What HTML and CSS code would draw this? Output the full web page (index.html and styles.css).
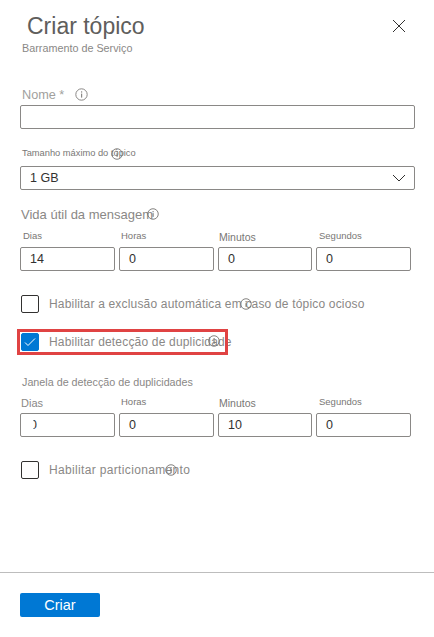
FILE: index.html

```html
<!DOCTYPE html>
<html lang="pt">
<head>
  <meta charset="UTF-8" />
  <meta name="viewport" content="width=device-width, initial-scale=1.0" />
  <title>Criar tópico</title>
  <link rel="stylesheet" href="styles.css">
</head>
<body>
  <div class="panel">
    <svg width="0" height="0" class="defs">
      <symbol id="info" viewBox="0 0 13 13">
        <circle cx="6.5" cy="6.5" r="5.7" fill="none" stroke="currentColor" stroke-width="1"/>
        <rect x="6" y="5.6" width="1.2" height="4" fill="currentColor"/>
        <rect x="6" y="3.3" width="1.2" height="1.3" fill="currentColor"/>
      </symbol>
    </svg>

    <header class="head">
      <div>
        <h1>Criar tópico</h1>
        <p class="subtitle">Barramento de Serviço</p>
      </div>
      <svg class="close" width="14" height="14" viewBox="0 0 14 14">
        <path d="M1 1L13 13M13 1L1 13" stroke="#323130" stroke-width="1" fill="none"/>
      </svg>
    </header>

    <div class="form">
      <div class="name-label">
        <span>Nome *</span>
        <svg class="info-inline"><use href="#info"/></svg>
      </div>
      <div class="box"></div>

      <div class="size-label">
        <span>Tamanho máximo do tópico</span>
        <svg class="info info-size"><use href="#info"/></svg>
      </div>
      <div class="box select">
        <span>1 GB</span>
        <svg width="14" height="8" viewBox="0 0 14 8">
          <path d="M1 1L7 7L13 1" stroke="#323130" stroke-width="1" fill="none"/>
        </svg>
      </div>

      <div class="life-label">
        <span>Vida útil da mensagem</span>
        <svg class="info info-life"><use href="#info"/></svg>
      </div>
      <div class="time-row">
        <div class="time"><label class="l-dias">Dias</label><div class="box"><span class="val">14</span></div></div>
        <div class="time"><label class="l-horas">Horas</label><div class="box"><span class="val">0</span></div></div>
        <div class="time"><label class="l-min">Minutos</label><div class="box"><span class="val">0</span></div></div>
        <div class="time"><label class="l-seg">Segundos</label><div class="box"><span class="val">0</span></div></div>
      </div>

      <div class="check check-auto">
        <span class="tick"></span>
        <span class="check-text">Habilitar a exclusão automática em caso de tópico ocioso
          <svg class="info info-auto"><use href="#info"/></svg>
        </span>
      </div>

      <div class="check check-dup">
        <span class="tick on">
          <svg width="12" height="10" viewBox="0 0 12 10">
            <path d="M1 5.5L4 8.5L11 1.5" stroke="#fff" stroke-width="1" fill="none"/>
          </svg>
        </span>
        <span class="check-text">Habilitar detecção de duplicidade
          <svg class="info info-dup"><use href="#info"/></svg>
        </span>
      </div>

      <div class="window-label">Janela de detecção de duplicidades</div>
      <div class="time-row">
        <div class="time"><label class="w-dias">Dias</label><div class="box"><span class="val cut">0</span></div></div>
        <div class="time"><label class="w-horas">Horas</label><div class="box"><span class="val">0</span></div></div>
        <div class="time"><label class="w-min">Minutos</label><div class="box"><span class="val">10</span></div></div>
        <div class="time"><label class="w-seg">Segundos</label><div class="box"><span class="val">0</span></div></div>
      </div>

      <div class="check check-part">
        <span class="tick"></span>
        <span class="check-text">Habilitar particionamento
          <svg class="info info-part"><use href="#info"/></svg>
        </span>
      </div>
    </div>

    <footer class="foot">
      <button class="create">Criar</button>
    </footer>
  </div>
</body>
</html>
```

FILE: styles.css

```css
body {
  font-family: "Liberation Sans", Arial, sans-serif;
  background: #fff;
  color: #8a8886;
  margin: 0;
}

.panel {
  width: 434px;
  height: 637px;
  display: flex;
  flex-direction: column;
  overflow: hidden;
}

.defs {
  position: absolute;
}

.head {
  display: flex;
  justify-content: space-between;
  padding: 13px 28px 0 22px;
  height: 70px;
  box-sizing: border-box;
}

h1 {
  margin: 0 0 0 5px;
  font-size: 23px;
  line-height: 26px;
  font-weight: 400;
  color: #605e5c;
}

.subtitle {
  margin: 3px 0 0;
  font-size: 10.8px;
  line-height: 13px;
  color: #8a8886;
}

.close {
  margin-top: 6px;
}

.form {
  flex: 1;
  padding: 0 19px 0 20px;
}

.box {
  height: 24px;
  box-sizing: border-box;
  border: 1px solid #8a8886;
  border-radius: 2px;
  display: flex;
  align-items: center;
  color: #323130;
  font-size: 12.5px;
}

.name-label {
  display: flex;
  align-items: center;
  height: 35px;
  padding: 17px 0 2px 2px;
  box-sizing: border-box;
  font-size: 12.7px;
  color: #a19f9d;
}

.info-inline {
  width: 13px;
  height: 13px;
  margin: 0 0 1px 11px;
  color: #8a8886;
}

.size-label,
.life-label {
  position: relative;
  width: max-content;
}

.size-label {
  margin-top: 18px;
  padding-left: 2px;
  height: 19px;
  font-size: 9.3px;
  line-height: 13px;
  color: #797775;
}

.select {
  justify-content: space-between;
  padding: 0 8px 0 9px;
}

.life-label {
  margin: 17px 0 7px;
  padding-left: 1px;
  height: 15px;
  font-size: 13px;
  line-height: 15px;
  color: #8a8886;
}

.info {
  position: absolute;
  width: 12px;
  height: 12px;
  color: #797775;
}

.info-size { left: 91px; top: 1px; }
.info-life { left: 127px; top: 1px; }
.info-auto { left: 191px; top: 1px; }
.info-dup { left: 159px; top: 0; }
.info-part { left: 116px; top: 1px; }

.time-row {
  display: grid;
  grid-template-columns: 95px 95px 94px 95px;
  gap: 4px;
}

.time {
  display: flex;
  flex-direction: column;
  justify-content: flex-end;
  height: 42px;
  font-size: 9.5px;
  color: #797775;
}

.time label {
  line-height: 12px;
}

.l-dias { margin: 0 0 5px 3px; }
.l-horas { margin: 0 0 5px 2px; }
.l-min { margin: 0 0 4px 1px; font-size: 10.5px; }
.l-seg { margin: 0 0 5px 3px; }

.w-dias { margin: 0 0 4px 1px; font-size: 11px; color: #8a8886; }
.w-horas { margin: 0 0 5px 2px; }
.w-min { margin: 0 0 4px 1px; font-size: 10.5px; }
.w-seg { margin: 0 0 5px 3px; }

.val {
  margin-left: 9px;
}

.cut {
  clip-path: inset(0 0 0 50%);
}

.check {
  display: flex;
  align-items: center;
  gap: 10px;
  height: 18px;
  padding-left: 1px;
}

.check-auto { margin-top: 24px; }
.check-dup { margin-top: 20px; position: relative; }
.check-part { margin-top: 24px; }

.check-dup::after {
  content: "";
  position: absolute;
  left: -3px;
  top: -4px;
  width: 205px;
  height: 20px;
  border: 3px solid #e04343;
}

.tick {
  width: 18px;
  height: 18px;
  box-sizing: border-box;
  border: 1px solid #323130;
  border-radius: 2px;
  display: flex;
  align-items: center;
  justify-content: center;
  flex-shrink: 0;
}

.tick.on {
  background: #0078d4;
  border-color: #0078d4;
}

.check-text {
  position: relative;
  font-size: 12px;
  letter-spacing: 0.18px;
  color: #8a8886;
}

.check-part .check-text {
  letter-spacing: 0.34px;
}

.window-label {
  margin: 25px 0 6px;
  padding-left: 2px;
  font-size: 10.75px;
  line-height: 13px;
  color: #8a8886;
}

.foot {
  height: 65px;
  box-sizing: border-box;
  border-top: 1px solid #bdbdbd;
  padding: 20px 20px 0;
}

.create {
  display: block;
  width: 80px;
  height: 24px;
  border: none;
  border-radius: 2px;
  background: #0078d4;
  color: #fff;
  font-family: inherit;
  font-size: 14.5px;
  padding: 0;
}
```
